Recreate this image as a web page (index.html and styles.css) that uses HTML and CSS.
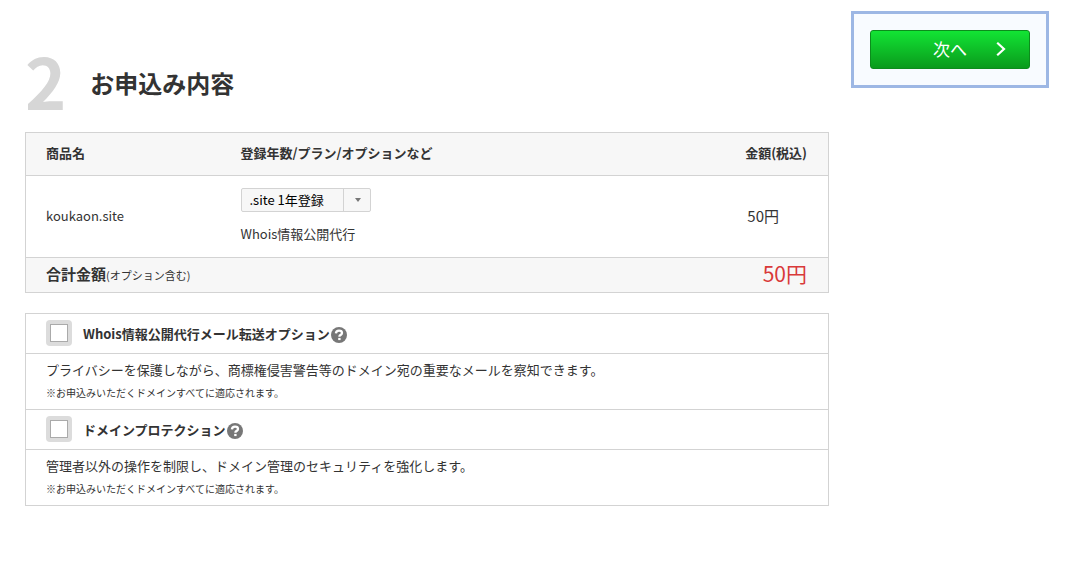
FILE: index.html
```html
<!DOCTYPE html>
<html lang="ja">
<head>
    <meta charset="UTF-8">
    <meta name="viewport" content="width=device-width, initial-scale=1.0">
    <title>お申込み内容</title>
    <link rel="stylesheet" href="styles.css">
</head>
<body>
    <div class="page">
        <main class="main">
            <div class="step-title">
                <span class="step-number">2</span>
                <h1>お申込み内容</h1>
            </div>

            <table class="order">
                <thead>
                    <tr>
                        <th class="col-name">商品名</th>
                        <th>登録年数/プラン/オプションなど</th>
                        <th class="col-price">金額(税込)</th>
                    </tr>
                </thead>
                <tbody>
                    <tr class="item">
                        <td>koukaon.site</td>
                        <td>
                            <div class="select-box">
                                <select aria-label="登録年数">
                                    <option>.site 1年登録</option>
                                </select>
                            </div>
                            <p class="item-note">Whois情報公開代行</p>
                        </td>
                        <td class="item-price">50円</td>
                    </tr>
                </tbody>
                <tfoot>
                    <tr>
                        <td colspan="2"><strong>合計金額</strong><small>(オプション含む)</small></td>
                        <td class="total-price">50円</td>
                    </tr>
                </tfoot>
            </table>

            <div class="options">
                <div class="option-head">
                    <span class="check"><input type="checkbox" id="opt-whois"></span>
                    <label for="opt-whois">Whois情報公開代行メール転送オプション</label>
                    <svg class="help" viewBox="0 0 16 16">
                        <circle cx="8" cy="8" r="8" fill="#777"/>
                        <path d="M4.9 6.4C5 4.5 6.2 3.7 8 3.7s3 .8 3 2.3c0 1.2-.8 1.7-1.6 2.1-.7.4-1 .7-1 1.6" fill="none" stroke="#fff" stroke-width="2.3"/>
                        <rect x="7.2" y="10.9" width="2.4" height="2.2" fill="#fff"/>
                    </svg>
                </div>
                <div class="option-body">
                    <p>プライバシーを保護しながら、商標権侵害警告等のドメイン宛の重要なメールを察知できます。</p>
                    <p class="notice">※お申込みいただくドメインすべてに適応されます。</p>
                </div>
                <div class="option-head">
                    <span class="check"><input type="checkbox" id="opt-protect"></span>
                    <label for="opt-protect">ドメインプロテクション</label>
                    <svg class="help" viewBox="0 0 16 16">
                        <circle cx="8" cy="8" r="8" fill="#777"/>
                        <path d="M4.9 6.4C5 4.5 6.2 3.7 8 3.7s3 .8 3 2.3c0 1.2-.8 1.7-1.6 2.1-.7.4-1 .7-1 1.6" fill="none" stroke="#fff" stroke-width="2.3"/>
                        <rect x="7.2" y="10.9" width="2.4" height="2.2" fill="#fff"/>
                    </svg>
                </div>
                <div class="option-body">
                    <p>管理者以外の操作を制限し、ドメイン管理のセキュリティを強化します。</p>
                    <p class="notice">※お申込みいただくドメインすべてに適応されます。</p>
                </div>
            </div>
        </main>

        <aside class="side">
            <button type="button" class="next">
                <span>次へ</span>
                <svg viewBox="0 0 10 14"><path d="M1.2.8L8 7l-6.800 6.200" fill="none" stroke="#fff" stroke-width="2.2"/></svg>
            </button>
        </aside>
    </div>
</body>
</html>
```
FILE: styles.css
```css
* {
    box-sizing: border-box;
}

body {
    margin: 0;
    background-color: #fff;
    color: #333;
    font-family: "Noto Sans CJK JP", sans-serif;
    font-size: 13px;
    line-height: 20px;
}

p,
h1 {
    margin: 0;
}

.page {
    display: flex;
    align-items: flex-start;
    gap: 22px;
    padding: 11px 21px 20px 25px;
}

.main {
    flex: 1;
    min-width: 0;
    padding-top: 40px;
}

/* step title */
.step-title {
    display: flex;
    align-items: center;
    gap: 24px;
    height: 64px;
    margin-bottom: 17px;
}

.step-number {
    padding-bottom: 6px;
    color: #d6d6d6;
    font-size: 70px;
    font-weight: bold;
    line-height: 64px;
}

.step-title h1 {
    font-size: 24px;
    line-height: 32px;
}

/* order table */
.order {
    width: 100%;
    border: 1px solid #d3d3d3;
    border-collapse: collapse;
    margin-bottom: 20px;
}

.order tr {
    border-bottom: 1px solid #d3d3d3;
}

.order th,
.order td {
    padding: 0 21px 2px 20px;
    text-align: left;
}

.order th {
    height: 43px;
    background-color: #f7f7f7;
}

.order .col-name {
    width: 195px;
}

.order .col-price {
    width: 110px;
    text-align: right;
}

.order .item td {
    height: 82px;
}

.order .item-price {
    padding-right: 49px;
    font-size: 15px;
    text-align: right;
}

.item-note {
    margin-top: 12px;
}

.order tfoot td {
    height: 35px;
    background-color: #f7f7f7;
}

.order strong {
    font-size: 15px;
}

.order small {
    font-size: 11px;
}

.order .total-price {
    padding-bottom: 5px;
    color: #d93a3a;
    font-size: 21px;
    text-align: right;
}

.select-box {
    position: relative;
    width: 130px;
    height: 24px;
}

.select-box select {
    appearance: none;
    display: block;
    width: 100%;
    height: 100%;
    padding: 0 32px 0 8px;
    border: 1px solid #d3d3d3;
    border-radius: 2px;
    background-color: #f7f7f7;
    color: #000;
    font: inherit;
}

.select-box::before {
    content: "";
    position: absolute;
    top: 0;
    right: 27px;
    height: 100%;
    border-left: 1px solid #d3d3d3;
}

.select-box::after {
    content: "";
    position: absolute;
    top: 10px;
    right: 10px;
    border: 3px solid transparent;
    border-top: 4px solid #777;
    border-bottom: 0;
}

/* options */
.options {
    border: 1px solid #d3d3d3;
}

.option-head {
    display: flex;
    align-items: center;
    height: 40px;
    padding: 0 20px 1px;
    border-bottom: 1px solid #d3d3d3;
}

.option-head label {
    margin-top: 2px;
    margin-left: 11px;
    font-weight: bold;
}

.check {
    display: flex;
    padding: 4px;
    border-radius: 4px;
    background-color: #dcdcdc;
}

.check input {
    appearance: none;
    width: 18px;
    height: 18px;
    margin: 0;
    border: 1px solid #aaa;
    background-color: #fff;
}

.check input:checked {
    background-color: #777;
}

.help {
    width: 16px;
    height: 16px;
    margin-top: 3px;
    margin-left: 1px;
}

.option-body {
    padding: 6px 20px;
    border-bottom: 1px solid #d3d3d3;
}

.option-body:last-child {
    border-bottom: 0;
}

.option-body .notice {
    margin-top: 3px;
    font-size: 10px;
}

/* next button */
.side {
    width: 198px;
    padding: 16px;
    border: 3px solid #9db7e4;
    background-color: #f8fbff;
}

.next {
    display: flex;
    align-items: center;
    justify-content: flex-end;
    gap: 29px;
    width: 100%;
    height: 39px;
    padding: 0 23px 2px;
    border: 1px solid #0c8c1c;
    border-radius: 3px;
    background: linear-gradient(#12e434, #0a9a1c);
    color: #fff;
    font-family: inherit;
    font-size: 17px;
    cursor: pointer;
}

.next svg {
    width: 10px;
    height: 14px;
}
```
